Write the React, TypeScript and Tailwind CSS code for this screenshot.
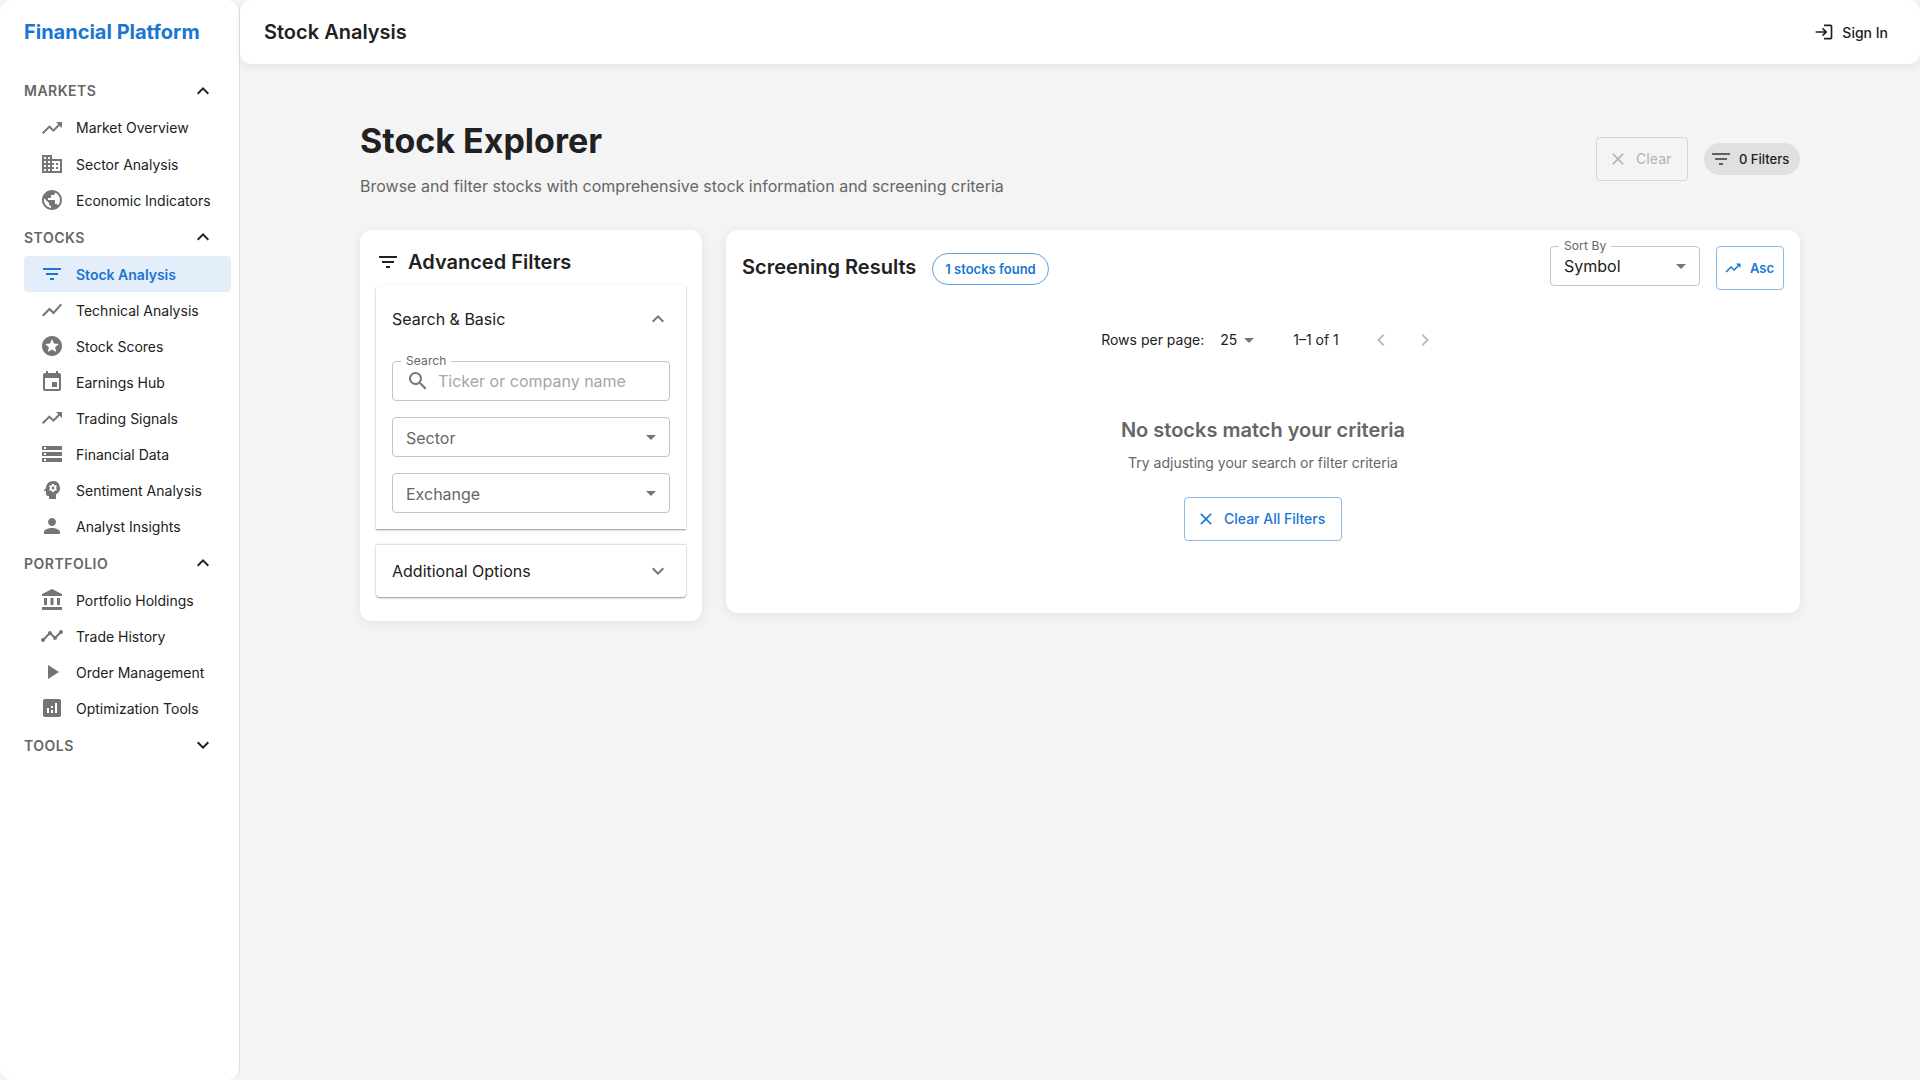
import type { ReactNode } from "react";
import type { IconType } from "react-icons";
import {
  MdAccountBalance, MdAnalytics, MdArrowDropDown, MdBusiness, MdChevronLeft, MdChevronRight, MdClear, MdEvent,
  MdExpandLess, MdExpandMore, MdFilterList, MdLogin, MdPerson, MdPlayArrow, MdPsychology, MdPublic, MdSearch,
  MdShowChart, MdStars, MdStorage, MdTimeline, MdTrendingUp,
} from "react-icons/md";

type Item = { label: string; icon: IconType; active?: boolean };
type Section = { title: string; open: boolean; items: Item[] };

const sections: Section[] = [
  {
    title: "MARKETS", open: true, items: [
      { label: "Market Overview", icon: MdTrendingUp },
      { label: "Sector Analysis", icon: MdBusiness },
      { label: "Economic Indicators", icon: MdPublic },
    ],
  },
  {
    title: "STOCKS", open: true, items: [
      { label: "Stock Analysis", icon: MdFilterList, active: true },
      { label: "Technical Analysis", icon: MdShowChart },
      { label: "Stock Scores", icon: MdStars },
      { label: "Earnings Hub", icon: MdEvent },
      { label: "Trading Signals", icon: MdTrendingUp },
      { label: "Financial Data", icon: MdStorage },
      { label: "Sentiment Analysis", icon: MdPsychology },
      { label: "Analyst Insights", icon: MdPerson },
    ],
  },
  {
    title: "PORTFOLIO", open: true, items: [
      { label: "Portfolio Holdings", icon: MdAccountBalance },
      { label: "Trade History", icon: MdTimeline },
      { label: "Order Management", icon: MdPlayArrow },
      { label: "Optimization Tools", icon: MdAnalytics },
    ],
  },
  { title: "TOOLS", open: false, items: [] },
];

function Sidebar() {
  return (
    <aside className="h-full w-60 shrink-0 rounded-xl border-r border-black/12 bg-white">
      <div className="flex h-16 items-center px-6 text-[20px] font-bold text-[#1976d2]">Financial Platform</div>
      <nav className="pt-[7.97px]">
        {sections.map((s) => (
          <div key={s.title}>
            <div className="flex h-[38px] items-center justify-between px-6">
              <span className="text-[14px] font-semibold tracking-[0.5px] text-[#666]">{s.title}</span>
              {s.open ? <MdExpandLess className="size-6" /> : <MdExpandMore className="size-6" />}
            </div>
            {s.items.map((it) => (
              <div
                key={it.label}
                className={
                  it.active
                    ? "mr-2 ml-6 flex h-[36.04px] items-center rounded bg-[#1976d2]/12 pl-4 text-[14px] font-semibold text-[#1976d2]"
                    : "mr-2 ml-6 flex h-[36.04px] items-center rounded pl-4 text-[14px] text-[#212121]"
                }
              >
                <it.icon className={it.active ? "mr-3 size-6 shrink-0" : "mr-3 size-6 shrink-0 text-black/54"} />
                <span className="whitespace-nowrap">{it.label}</span>
              </div>
            ))}
          </div>
        ))}
      </nav>
    </aside>
  );
}

function Field({ label, className, children }: { label?: string; className: string; children: ReactNode }) {
  return (
    <div className={className}>
      {label && (
        <span className="absolute -top-[10px] left-[8px] bg-white px-[5px] text-[12px] leading-[18px] tracking-[0.11px] text-[#666]">
          {label}
        </span>
      )}
      {children}
    </div>
  );
}

function SelectField({ text }: { text: string }) {
  return (
    <Field className="flex h-10 items-center justify-between rounded border border-black/23 pr-[6px] pl-[13px] text-[16px] text-[#666]">
      <span className="pt-0.5">{text}</span>
      <MdArrowDropDown className="size-6 text-black/54" />
    </Field>
  );
}

function Filters() {
  return (
    <section className="w-[342px] rounded-xl bg-white px-4 pt-4 pb-6 shadow-[0_2px_12px_rgba(0,0,0,0.08)]">
      <h2 className="flex h-8 items-center gap-2 text-[20px] font-semibold">
        <MdFilterList className="size-6" />
        Advanced Filters
      </h2>
      <div className="mt-[7px] h-[244px] rounded-t bg-white px-4 shadow-[0_1px_3px_rgba(0,0,0,0.12),0_1px_2px_rgba(0,0,0,0.24),0_1px_0_rgba(0,0,0,0.1)]">
        <div className="flex h-[68px] items-center justify-between text-[16px]">
          Search &amp; Basic
          <MdExpandLess className="size-6 text-black/54" />
        </div>
        <div className="mt-2 flex flex-col gap-4">
          <Field label="Search" className="relative flex h-10 items-center rounded border border-black/23 pl-[13px]">
            <MdSearch className="mr-2 size-6 text-black/54" />
            <span className="text-[16px] text-[#a6a6a6]">Ticker or company name</span>
          </Field>
          <SelectField text="Sector" />
          <SelectField text="Exchange" />
        </div>
      </div>
      <div className="mt-[15px] flex h-[53px] items-center justify-between rounded-b border-t border-black/12 bg-white px-4 text-[16px] shadow-[0_1px_3px_rgba(0,0,0,0.12),0_1px_2px_rgba(0,0,0,0.24),0_1px_0_rgba(0,0,0,0.1)]">
        Additional Options
        <MdExpandMore className="size-6 text-black/54" />
      </div>
    </section>
  );
}

function Results() {
  return (
    <section className="h-[383px] flex-1 rounded-xl bg-white px-4 pt-4 shadow-[0_2px_12px_rgba(0,0,0,0.08)]">
      <div className="flex items-start justify-between">
        <div className="flex items-start pt-[5px]">
          <h2 className="text-[20px] leading-8 font-semibold">Screening Results</h2>
          <span className="mt-[2px] ml-4 flex h-8 items-center rounded-full border border-[#1976d2]/70 px-3 pt-0.5 text-[13px] font-semibold text-[#1976d2]">
            1 stocks found
          </span>
        </div>
        <div className="flex items-start gap-4">
          <Field label="Sort By" className="relative flex h-10 w-[150px] items-center justify-between rounded border border-black/23 pr-[6px] pl-[13px] text-[16px]">
            Symbol
            <MdArrowDropDown className="size-6 text-black/54" />
          </Field>
          <button className="flex h-11 w-[68px] items-center rounded border border-[#1976d2]/50 pl-[7px] text-[13px] font-semibold text-[#1976d2]">
            <MdTrendingUp className="mr-2 size-[18px]" />
            <span className="pt-0.5">Asc</span>
          </button>
        </div>
      </div>
      <div className="mt-6 flex h-[52px] items-center justify-center pl-3 text-[14px]">
        <span className="pb-0.5">Rows per page:</span>
        <span className="ml-4 pb-0.5">25</span>
        <MdArrowDropDown className="size-6 text-black/54" />
        <span className="ml-8 pb-0.5">1–1 of 1</span>
        <MdChevronLeft className="ml-[30px] size-6 text-black/26" />
        <MdChevronRight className="ml-5 size-6 text-black/26" />
      </div>
      <div className="flex flex-col items-center pt-12">
        <h3 className="text-[20px] leading-8 font-semibold text-[#666]">No stocks match your criteria</h3>
        <p className="mt-[7px] text-[14px] leading-5 text-[#666]">Try adjusting your search or filter criteria</p>
        <button className="mt-6 flex h-11 w-[158px] items-center rounded border border-[#1976d2]/50 pl-[11px] text-[14px] font-medium text-[#1976d2]">
          <MdClear className="mr-2 size-5" />
          <span className="pb-0.5">Clear All Filters</span>
        </button>
      </div>
    </section>
  );
}

export default function App() {
  return (
    <div className="flex h-screen w-screen overflow-hidden bg-[#f4f4f4] font-['Inter',sans-serif] text-[#212121]">
      <Sidebar />
      <div className="flex min-w-0 flex-1 flex-col">
        <header className="flex h-16 shrink-0 items-center justify-between rounded-xl bg-white pr-8 pl-6 shadow-[0_2px_8px_rgba(0,0,0,0.08)]">
          <h1 className="text-[20px] font-semibold">Stock Analysis</h1>
          <button className="flex items-center gap-2 text-[14px] font-medium">
            <MdLogin className="size-5" />
            Sign In
          </button>
        </header>
        <main className="mx-auto w-[1440px] pt-[52px]">
          <div className="flex h-[114px] items-start justify-between">
            <div>
              <h2 className="text-[34px] leading-[50px] font-bold">Stock Explorer</h2>
              <p className="mt-2 text-[16px] leading-6 text-[#666]">
                Browse and filter stocks with comprehensive stock information and screening criteria
              </p>
            </div>
            <div className="mt-[21px] flex items-center gap-4">
              <button className="flex h-11 w-[92px] items-center rounded border border-black/12 pl-[11px] text-[14px] font-medium text-black/26">
                <MdClear className="mr-2 size-5" />
                <span className="pb-0.5">Clear</span>
              </button>
              <span className="flex h-8 w-24 items-center rounded-full bg-[#e0e0e0] pl-[5px] text-[13px] font-medium">
                <MdFilterList className="mr-[6px] size-6 text-[#616161]" />
                <span className="pt-0.5">0 Filters</span>
              </span>
            </div>
          </div>
          <div className="flex items-start gap-6">
            <Filters />
            <Results />
          </div>
        </main>
      </div>
    </div>
  );
}
